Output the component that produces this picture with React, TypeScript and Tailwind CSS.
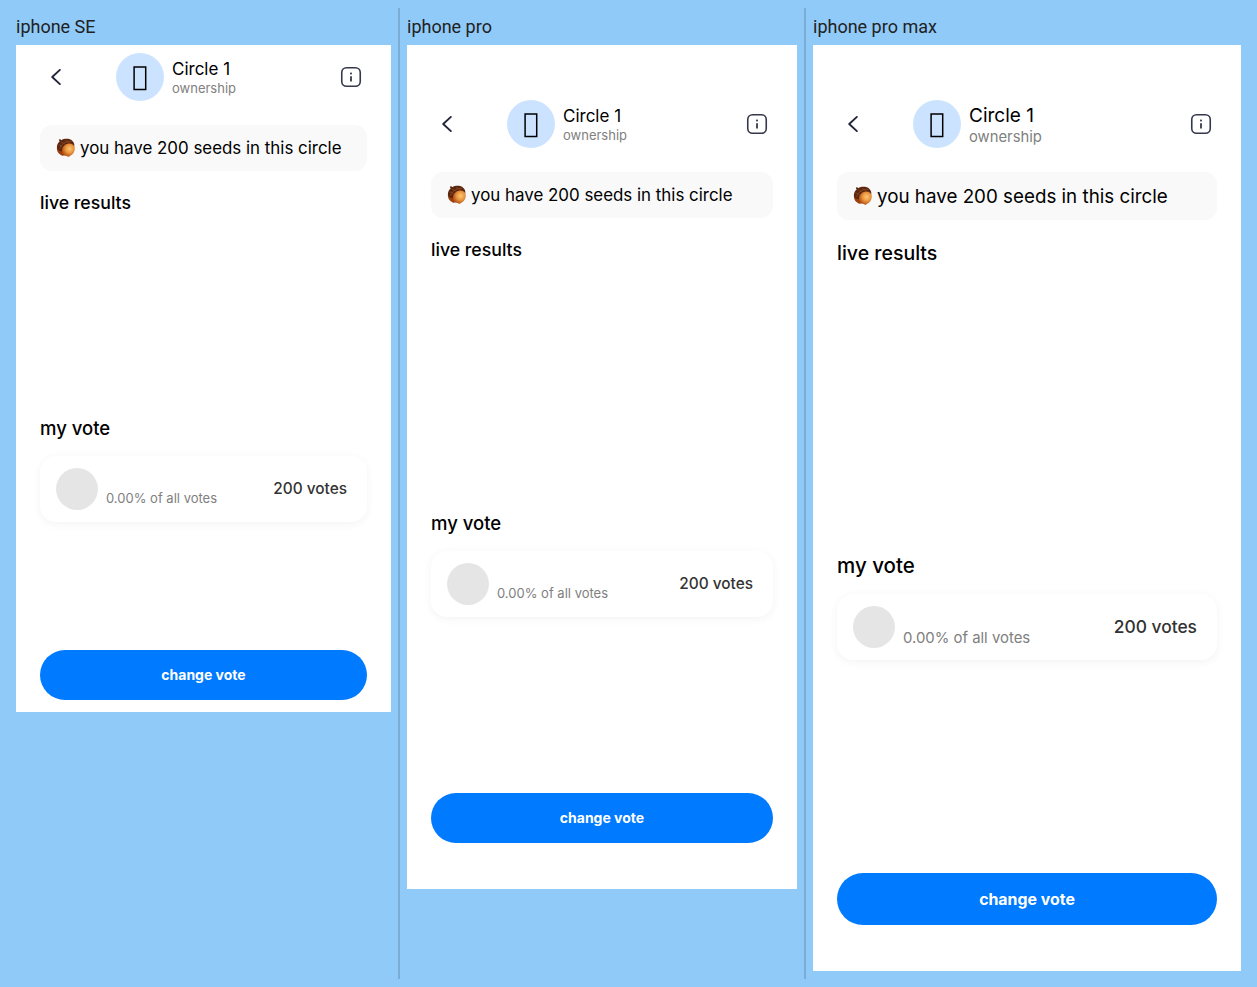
type Device = {
  name: string;
  frame: string;
  box: string;
  title: string;
  subtitle: string;
  headings: string;
  live: string;
  myVote: string;
  liveGap: string;
  share: string;
  votes: string;
  seeds: string;
  button: string;
};

const devices: Device[] = [
  {
    name: "iphone SE",
    frame: "h-[667px] w-[375px] pt-2 pb-3",
    box: "h-[46px]",
    title: "text-[17px] leading-[22px]",
    subtitle: "text-[13px] leading-[17px]",
    headings: "mt-5",
    live: "text-[17.7px]",
    myVote: "text-[18.5px]",
    liveGap: "mt-[201px]",
    share: "pt-[18px] text-[13px] leading-[18px]",
    votes: "text-[15.4px]",
    seeds: "text-[16.9px]",
    button: "h-[50px] pb-0.5 text-[14px]",
  },
  {
    name: "iphone pro",
    frame: "h-[844px] w-[390px] pt-[55px] pb-[46px]",
    box: "h-[46px]",
    title: "text-[17px] leading-[22px]",
    subtitle: "text-[13px] leading-[17px]",
    headings: "mt-5",
    live: "text-[17.7px]",
    myVote: "text-[18.5px]",
    liveGap: "mt-[249px]",
    share: "pt-[18px] text-[13px] leading-[18px]",
    votes: "text-[15.4px]",
    seeds: "text-[16.9px]",
    button: "h-[50px] pb-0.5 text-[14px]",
  },
  {
    name: "iphone pro max",
    frame: "h-[926px] w-[428px] pt-[55px] pb-[46px]",
    box: "h-12",
    title: "pt-0.5 text-[19px] leading-6",
    subtitle: "text-[14.8px] leading-[19px]",
    headings: "mt-[21px]",
    live: "text-[19.5px]",
    myVote: "text-[20.5px]",
    liveGap: "mt-[289px]",
    share: "pt-[23px] text-[14.9px] leading-[19px]",
    votes: "pt-px text-[17.4px]",
    seeds: "text-[18.8px]",
    button: "h-[52px] pt-0.5 text-[15.9px]",
  },
];

function BackIcon() {
  return (
    <svg viewBox="0 0 32 32" className="size-8" fill="none" stroke="#23263b" strokeWidth="1.9">
      <path d="M19.9 8.9 12.2 16l7.7 7.1" strokeLinecap="round" strokeLinejoin="round" />
    </svg>
  );
}

function InfoIcon() {
  return (
    <svg viewBox="0 0 32 32" className="size-8" fill="none">
      <rect x="6.75" y="6.75" width="18.5" height="18.5" rx="4.8" stroke="#35384b" strokeWidth="1.6" />
      <path d="M16 15.2v5.4" stroke="#35384b" strokeWidth="1.8" />
      <rect x="15.1" y="11.6" width="1.8" height="1.8" fill="#35384b" />
    </svg>
  );
}

function MissingGlyph() {
  return (
    <svg viewBox="0 0 48 48" className="size-12" fill="none">
      <rect x="18.1" y="14" width="11.6" height="22.5" stroke="#000" strokeWidth="1.5" />
    </svg>
  );
}

function Acorn({ id }: { id: string }) {
  return (
    <svg viewBox="0 0 20 20" className="size-5 shrink-0">
      <defs>
        <radialGradient id={id} cx="0.6" cy="0.4" r="0.62">
          <stop offset="0" stopColor="#ffc574" />
          <stop offset="0.5" stopColor="#ea9740" />
          <stop offset="1" stopColor="#b04c12" />
        </radialGradient>
      </defs>
      <path
        d="M.9 9.500C.6 13 2.500 16.300 6.500 17.800L11 17V8Z"
        fill="#9c3f10"
      />
      <path
        d="M3.200 1.400c.9-.6 1.700-.1 2 .9C8.300.4 13.500.2 16.400 2.900c1.400 1.300 2.300 3.500 1.900 5.300L9 13l-4 .2C2.400 12.800.8 11 .9 8.700 1 6.500 2 4.700 3.700 3.500c-.6-.7-.9-1.500-.5-2.100Z"
        fill="#5b260e"
      />
      <path
        d="M2.400 7c2 .2 3.600 1 4.700 2.500M5.200 4.400c1.800.2 3.200 1 4.200 2.200M8.800 2.700c2 .2 3.400.9 4.600 2M15.300 3.400C10.500 3 5 5.600 3.600 11"
        fill="none"
        stroke="#98532a"
        strokeWidth="0.6"
      />
      <path
        d="M18.600 9.200c.6 3.700-1.200 7.300-4.600 8.500-.5.800-1.100 1.300-1.800 1.100-.6-.1-.9-.5-1.400-.9C7.500 17.600 5.700 15.300 6 12.200c.3-3.400 3.300-6.300 6.700-6.600 3-.2 5.500 1.200 5.900 3.600Z"
        fill={`url(#${id})`}
      />
    </svg>
  );
}

function Phone({ device, index }: { device: Device; index: number }) {
  return (
    <section className="shrink-0 pt-2">
      <h2 className="h-[29px] font-['Roboto',sans-serif] text-[18px] leading-[22px] text-[#212121]">
        {device.name}
      </h2>
      <div className={`flex flex-col bg-white px-6 text-black ${device.frame}`}>
        <header className="flex h-12 items-center">
          <BackIcon />
          <div className="ml-11 size-12 rounded-full bg-[#cce3ff]">
            <MissingGlyph />
          </div>
          <div className="ml-2 flex-1">
            <div className={device.title}>Circle 1</div>
            <div className={`text-[#808080] ${device.subtitle}`}>ownership</div>
          </div>
          <InfoIcon />
        </header>
        <div className={`mt-6 flex shrink-0 items-center gap-1 rounded-xl bg-[#f9f9f9] px-4 whitespace-nowrap ${device.box} ${device.seeds}`}>
          <Acorn id={`nut-${index}`} />
          <span className="pt-0.5">you have 200 seeds in this circle</span>
        </div>
        <h3 className={`leading-6 font-medium ${device.headings} ${device.live}`}>live results</h3>
        <h3 className={`leading-6 font-medium ${device.liveGap} ${device.myVote}`}>my vote</h3>
        <div className="mt-4 flex h-[65.5px] shrink-0 items-center rounded-2xl bg-white pr-5 pl-4 shadow-[0_2px_10px_rgba(0,0,0,0.05)]">
          <div className="h-[41.5px] w-[42px] rounded-full bg-[#e5e5e5]" />
          <div className={`ml-2 flex-1 text-[#808080] ${device.share}`}>0.00% of all votes</div>
          <div className={`font-medium text-[#333] ${device.votes}`}>200 votes</div>
        </div>
        <button className={`mt-auto shrink-0 rounded-full bg-[#007aff] font-bold text-white ${device.button}`}>
          change vote
        </button>
      </div>
    </section>
  );
}

function Divider() {
  return <div className="mx-[7px] w-0.5 shrink-0 bg-[#7aacd6]" />;
}

export default function App() {
  return (
    <main className="flex h-[987px] w-[1257px] overflow-hidden bg-[#90caf9] px-4 py-2 font-['Inter',sans-serif]">
      <Phone device={devices[0]} index={0} />
      <Divider />
      <Phone device={devices[1]} index={1} />
      <Divider />
      <Phone device={devices[2]} index={2} />
    </main>
  );
}
